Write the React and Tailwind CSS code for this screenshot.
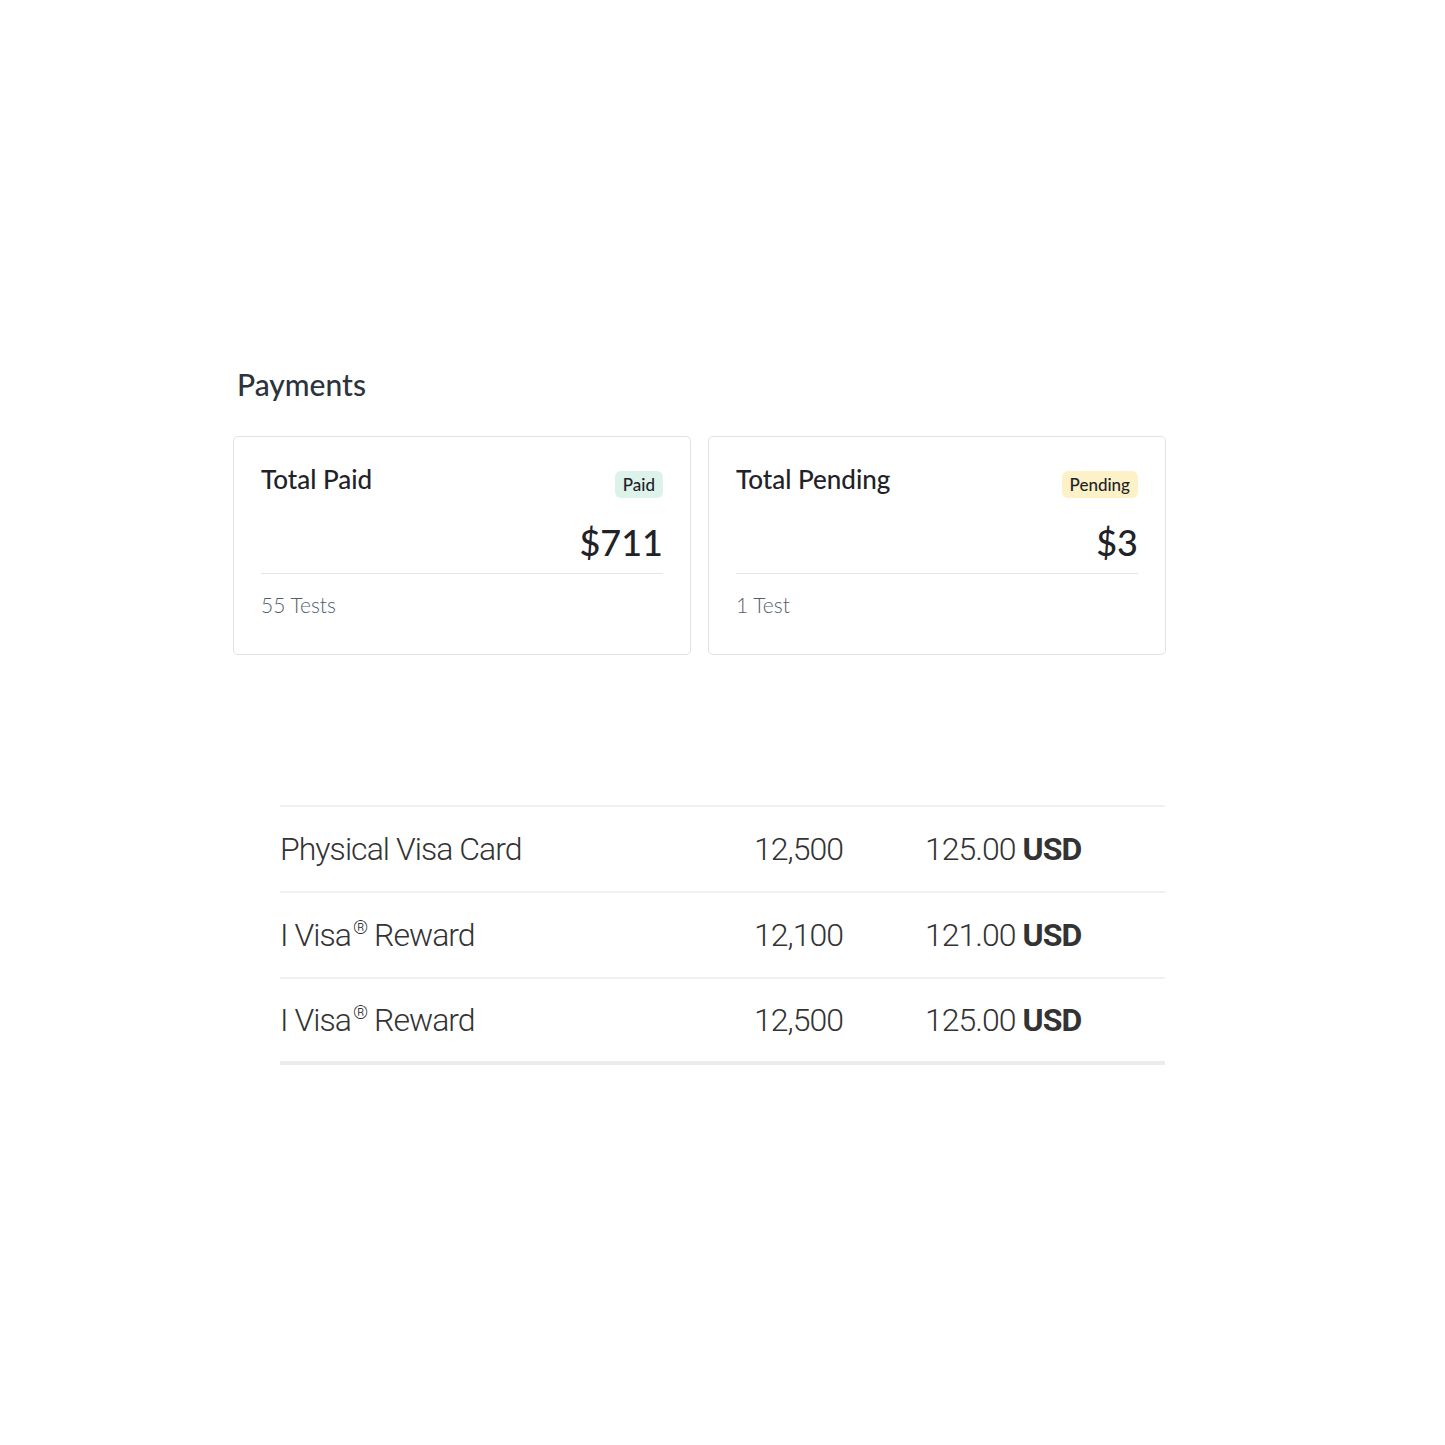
import React from "react";

const cards = [
  { title: "Total Paid", badge: "Paid", badgeClass: "bg-[#dcf2ea]", amount: "$711", count: "55 Tests" },
  { title: "Total Pending", badge: "Pending", badgeClass: "bg-[#fdf1c7]", amount: "$3", count: "1 Test" },
];

const rows = [
  { name: "Physical Visa Card", points: "12,500", value: "125.00" },
  { name: "I Visa", reg: true, points: "12,100", value: "121.00" },
  { name: "I Visa", reg: true, points: "12,500", value: "125.00" },
];

const StatCard = ({ title, badge, badgeClass, amount, count }) => (
  <div className="w-[458px] h-[219px] border border-[#dfe2e6] rounded-[5px] bg-white px-[27px] pt-[24px]">
    <div className="flex items-start justify-between">
      <span className="text-[26px] leading-[36px] font-medium text-[#1f2328]">{title}</span>
      <span className={`mt-[10px] px-[8px] h-[27px] flex items-center rounded-[6px] text-[17px] font-medium text-[#1f2328] ${badgeClass}`}>
        {badge}
      </span>
    </div>
    <div className="text-right text-[36px] leading-[48px] font-medium text-[#1f2328] mt-[20px]">{amount}</div>
    <div className="border-t border-[#e2e5e9] mt-[7px] pt-[15px] text-[21px] font-light text-[#555f6b]">{count}</div>
  </div>
);

export default function App() {
  return (
    <div className="min-h-[1445px] bg-white pt-[362px]" style={{ fontFamily: "Lato, 'Noto Sans', sans-serif" }}>
      <div className="ml-[233px] w-[934px]">
        <h2 className="ml-[4px] text-[30px] leading-[44px] font-medium text-[#2c333b]">Payments</h2>
        <div className="mt-[30px] flex gap-[17px]">
          {cards.map((c) => (
            <StatCard key={c.title} {...c} />
          ))}
        </div>
      </div>

      <div
        className="ml-[280px] w-[885px] mt-[150px] border-t-2 border-[#f1f1f1]"
        style={{ fontFamily: "Roboto, 'Liberation Sans', sans-serif" }}
      >
        {rows.map((r, i) => (
          <div
            key={i}
            className={`flex items-center h-[86px] text-[32px] font-light tracking-[-0.03em] text-[#333333] ${
              i === rows.length - 1 ? "border-b-[4px] border-[#ececec]" : "border-b-2 border-[#f1f1f1]"
            }`}
          >
            <span className="w-[474px]">
              {r.name}
              {r.reg && (
                <>
                  <sup className="ml-[2px] text-[19px] top-[-0.65em]">®</sup> Reward
                </>
              )}
            </span>
            <span className="w-[171px]">{r.points}</span>
            <span>
              {r.value} <span className="font-bold">USD</span>
            </span>
          </div>
        ))}
      </div>
    </div>
  );
}
